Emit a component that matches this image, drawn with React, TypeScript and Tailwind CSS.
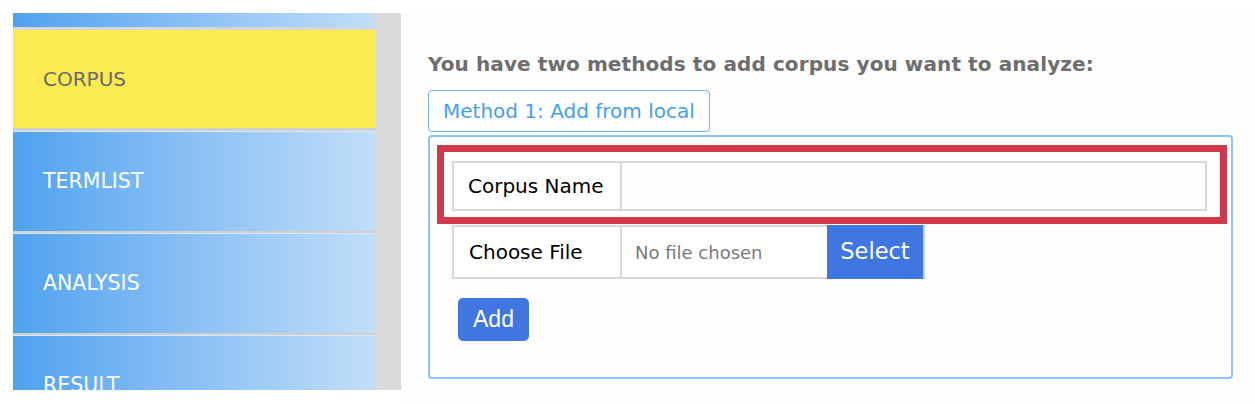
import React from "react";

const navItems = ["TERMLIST", "ANALYSIS", "RESULT"];

function App() {
  return (
    <div className="w-[1255px] h-[404px] bg-white overflow-hidden pt-[13px] pl-[13px] flex" style={{ fontFamily: '"DejaVu Sans", Verdana, sans-serif' }}>
      {/* sidebar */}
      <div className="w-[363px] h-[377px] flex flex-col overflow-hidden shrink-0">
        <div className="h-[17px] shrink-0 bg-gradient-to-r from-[#4ea2ef] to-[#c2def8] border-b-[3px] border-[#d4d8da]"></div>
        <div className="h-[101px] shrink-0 bg-[#fbea50] border-b-[3px] border-b-[#d0d0d0] flex items-center pl-[30px] text-[20px] text-[#6a6b6e]">
          CORPUS
        </div>
        {navItems.map((item) => (
          <div key={item} className="h-[102px] shrink-0 bg-gradient-to-r from-[#4ea2ef] to-[#c2def8] border-t border-[#dbe9f6] border-b-[2px] border-b-[#cfcfcf] flex items-center pl-[30px] text-[20.5px] text-white">
            {item}
          </div>
        ))}
      </div>
      <div className="w-[25px] h-[377px] bg-[#dadada] shrink-0"></div>

      {/* main */}
      <div className="w-[854px] h-[391px] bg-[#fdfdfd] pl-[27px] pt-[38px]">
        <h2 className="text-[20px] font-bold text-[#6e6e6e] leading-[26px] tracking-[0.1px]">
          You have two methods to add corpus you want to analyze:
        </h2>
        <button className="mt-[13px] h-[42px] px-[14px] border border-[#6db3f2] rounded-[4px] bg-white text-[#42a0f0] text-[20px]">
          Method 1: Add from local
        </button>
        <div className="mt-[3px] w-[805px] h-[244px] border-2 border-[#8cc4f4] rounded-[4px] bg-[#fdfdfd] pt-[8px] pl-[7px]">
          <div className="w-[790px] h-[79px] border-[7px] border-[#d0394b] pt-[9px] pl-[8px]">
            <div className="flex h-[50px] w-[755px] border-2 border-[#d8d8d8] bg-white">
              <div className="w-[168px] h-full flex items-center pl-[14px] text-[20px] text-black border-r-2 border-[#d8d8d8]">
                Corpus Name
              </div>
              <div className="flex-1 bg-[#fefefe]"></div>
            </div>
          </div>
          <div className="ml-[15px] mt-[1px] flex h-[54px] w-[473px]">
            <div className="w-[170px] h-full flex items-center pl-[15px] text-[20px] text-black bg-white border-2 border-[#d8d8d8]">
              Choose File
            </div>
            <div className="w-[205px] h-full flex items-center pl-[13px] text-[18px] text-[#7a7a7a] bg-white border-y-2 border-[#d8d8d8]">
              No file chosen
            </div>
            <div className="w-[98px] h-full flex items-center justify-center bg-[#3f76e0] text-white text-[22.5px] border-r-2 border-[#c9ced6]">
              Select
            </div>
          </div>
          <button className="mt-[19px] ml-[21px] w-[71px] h-[43px] rounded-[5px] bg-[#3f76e0] text-white text-[23px]" style={{ fontFamily: '"Liberation Sans", Arial, sans-serif' }}>
            Add
          </button>
        </div>
      </div>
    </div>
  );
}

export default App;
